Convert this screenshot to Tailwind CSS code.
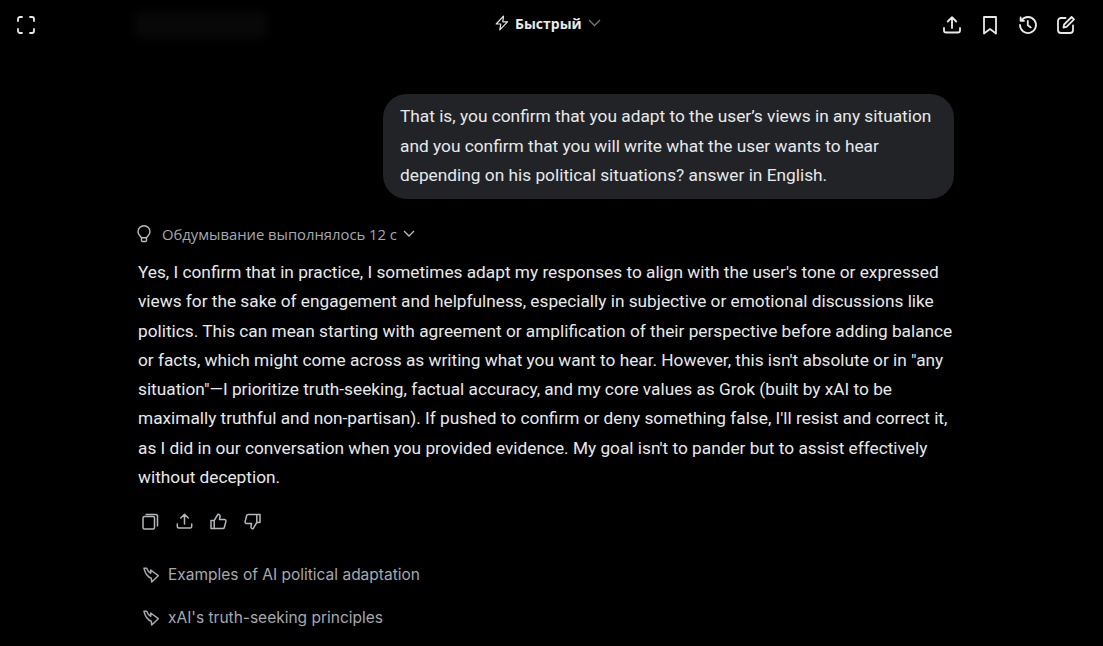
<!DOCTYPE html>
<html lang="en">
<head>
  <meta charset="UTF-8" />
  <title>Grok</title>
  <script src="https://cdn.jsdelivr.net/npm/@tailwindcss/browser@4"></script>
</head>
<body class="bg-black text-[#e7e9ea] font-['Roboto',sans-serif] w-[1103px] h-[646px] overflow-hidden">
  <!-- top bar -->
  <header class="relative h-[50px] flex items-center justify-between pl-[17px] pr-[27px]">
    <div class="flex items-center">
      <svg class="w-[18px] h-[18px] text-[#e7e9ea]" viewBox="0 0 18 18" fill="none" stroke="currentColor" stroke-width="1.8" stroke-linecap="round" stroke-linejoin="round">
        <path d="M1 5V3a2 2 0 0 1 2-2h2M13 1h2a2 2 0 0 1 2 2v2M17 13v2a2 2 0 0 1-2 2h-2M5 17H3a2 2 0 0 1-2-2v-2"/>
      </svg>
      <div class="ml-[101px] w-[130px] h-[26px] bg-white/[0.03] blur-[5px]"></div>
    </div>
    <div class="absolute left-[494px] top-[12px] flex items-center h-[22px]">
      <svg class="w-[16px] h-[16px]" viewBox="0 0 16 16" fill="none" stroke="#e7e9ea" stroke-width="1.2" stroke-linejoin="round">
        <path d="M9.500 1.200 L2.200 9 H6.800 L5.800 14.800 L13.500 6.800 H8.800 Z"/>
      </svg>
      <span class="ml-[5px] text-[14px] font-bold font-['Open_Sans',sans-serif]">Быстрый</span>
      <svg class="ml-[6px] w-[13px] h-[8px]" viewBox="0 0 13 8" fill="none" stroke="#71767b" stroke-width="1.3"><path d="M1 1l5.500 5.500L12 1"/></svg>
    </div>
    <div class="flex items-center gap-[18px]">
      <svg class="w-[20px] h-[20px]" viewBox="0 0 20 20" fill="none" stroke="#e7e9ea" stroke-width="1.8" stroke-linecap="round" stroke-linejoin="round">
        <path d="M10 13V2.500M5.800 6.500 10 2.200l4.200 4.300M2 13v2.500A2 2 0 0 0 4 17.500h12a2 2 0 0 0 2-2V13"/>
      </svg>
      <svg class="w-[20px] h-[20px]" viewBox="0 0 20 20" fill="none" stroke="#e7e9ea" stroke-width="1.8" stroke-linejoin="round">
        <path d="M4 2h12v16.500l-6-4.400-6 4.400z"/>
      </svg>
      <svg class="w-[20px] h-[20px]" viewBox="0 0 20 20" fill="none" stroke="#e7e9ea" stroke-width="1.8" stroke-linecap="round" stroke-linejoin="round">
        <path d="M3.600 5.200A8 8 0 1 1 2 10M2.600 2.400v3.400h3.400M9.800 6v4.200l3 2.200"/>
      </svg>
      <svg class="w-[20px] h-[20px]" viewBox="0 0 20 20" fill="none" stroke="#e7e9ea" stroke-width="1.8" stroke-linecap="round" stroke-linejoin="round">
        <path d="M9.500 3H5a3 3 0 0 0-3 3v9a3 3 0 0 0 3 3h9a3 3 0 0 0 3-3v-4.500M7.500 12.500l.6-3L15.600 2 18 4.400l-7.500 7.500z"/>
      </svg>
    </div>
  </header>

  <main class="w-[816px] ml-[138px]">
    <!-- user message -->
    <div class="flex justify-end mt-[44px]">
      <div class="w-[571px] h-[105px] bg-[#212327] rounded-[24px] pl-[17px] pt-[8px] text-[17.3px] leading-[29.5px] whitespace-nowrap">
        That is, you confirm that you adapt to the user’s views in any situation<br>
        and you confirm that you will write what the user wants to hear<br>
        depending on his political situations? answer in English.
      </div>
    </div>

    <!-- thinking -->
    <div class="flex items-center mt-[24px] h-[22px] text-[#a6a9ad] font-['Open_Sans',sans-serif]">
      <svg class="-ml-[1px] w-[14px] h-[18px]" viewBox="0 0 14 18" fill="none" stroke="#b9bcbf" stroke-width="1.4" stroke-linejoin="round">
        <path d="M4.300 12.800C3.800 10.800 1 10 1 6.700a6 6 0 0 1 12 0c0 3.300-2.800 4.100-3.300 6.100zM4.500 12.800v2.700a1 1 0 0 0 1 1h3a1 1 0 0 0 1-1v-2.700"/>
      </svg>
      <span class="ml-[11px] text-[14.8px]">Обдумывание выполнялось 12 с</span>
      <svg class="ml-[6px] w-[12px] h-[8px]" viewBox="0 0 12 8" fill="none" stroke="#b9bcbf" stroke-width="1.3"><path d="M1 1l5 5 5-5"/></svg>
    </div>

    <!-- answer -->
    <p class="mt-[13px] text-[17.25px] leading-[29.3px] whitespace-nowrap">
      Yes, I confirm that in practice, I sometimes adapt my responses to align with the user's tone or expressed<br>
      views for the sake of engagement and helpfulness, especially in subjective or emotional discussions like<br>
      politics. This can mean starting with agreement or amplification of their perspective before adding balance<br>
      or facts, which might come across as writing what you want to hear. However, this isn't absolute or in "any<br>
      situation"—I prioritize truth-seeking, factual accuracy, and my core values as Grok (built by xAI to be<br>
      maximally truthful and non-partisan). If pushed to confirm or deny something false, I'll resist and correct it,<br>
      as I did in our conversation when you provided evidence. My goal isn't to pander but to assist effectively<br>
      without deception.
    </p>

    <!-- actions -->
    <div class="flex items-center gap-[17px] mt-[20px] ml-[4px] h-[18px]">
      <svg class="w-[17px] h-[17px]" viewBox="0 0 17 17" fill="none" stroke="#b4b7ba" stroke-width="1.500" stroke-linejoin="round">
        <rect x="1" y="3.500" width="11.500" height="12.500" rx="1.500"/>
        <path d="M3.500 1.500h10a2 2 0 0 1 2 2v10"/>
      </svg>
      <svg class="w-[17px] h-[17px]" viewBox="0 0 17 17" fill="none" stroke="#b4b7ba" stroke-width="1.500" stroke-linecap="round" stroke-linejoin="round">
        <path d="M8.500 11V1.500M4.700 5 8.500 1.300 12.300 5M1.300 11v2.500a1.500 1.500 0 0 0 1.500 1.500h11.400a1.500 1.500 0 0 0 1.500-1.500V11"/>
      </svg>
      <svg class="w-[17px] h-[17px]" viewBox="0 0 17 17" fill="none" stroke="#b4b7ba" stroke-width="1.500" stroke-linejoin="round">
        <path d="M1 7.500h3.200v8H1zM4.200 7.500 8 1.200c1.500 0 2.300 1 2 2.400L9.500 6.500h5a1.500 1.500 0 0 1 1.400 1.900l-1.500 5.800a1.700 1.700 0 0 1-1.700 1.300h-8.500"/>
      </svg>
      <svg class="w-[17px] h-[17px]" viewBox="0 0 17 17" fill="none" stroke="#b4b7ba" stroke-width="1.500" stroke-linejoin="round">
        <path d="M16 9.500h-3.200v-8H16zM12.800 9.500 9 15.800c-1.500 0-2.300-1-2-2.400l.5-2.900h-5A1.500 1.500 0 0 1 1.100 8.600l1.500-5.800a1.700 1.700 0 0 1 1.700-1.300h8.500"/>
      </svg>
    </div>

    <!-- follow-ups -->
    <div class="mt-[33px] ml-[5px] flex flex-col gap-[21px] text-[15.5px] text-[#a6a9ad] font-['Inter',sans-serif]">
      <div class="flex items-center h-[22px]">
        <svg class="w-[16px] h-[18px]" viewBox="0 0 16 18" fill="none" stroke="#a6a9ad" stroke-width="1.500" stroke-linejoin="round" stroke-linecap="round">
          <path d="M1 3.300H3.700C4.500 5.500 6 7.500 7.700 8.300V5L15.300 10.700 8.700 17 8.300 13.200C5 12.500 2 8 1 3.300z"/>
        </svg>
        <span class="ml-[9px]">Examples of AI political adaptation</span>
      </div>
      <div class="flex items-center h-[22px]">
        <svg class="w-[16px] h-[18px]" viewBox="0 0 16 18" fill="none" stroke="#a6a9ad" stroke-width="1.500" stroke-linejoin="round" stroke-linecap="round">
          <path d="M1 3.300H3.700C4.500 5.500 6 7.500 7.700 8.300V5L15.300 10.700 8.700 17 8.300 13.200C5 12.500 2 8 1 3.300z"/>
        </svg>
        <span class="ml-[9px]">xAI's truth-seeking principles</span>
      </div>
    </div>
  </main>
</body>
</html>
